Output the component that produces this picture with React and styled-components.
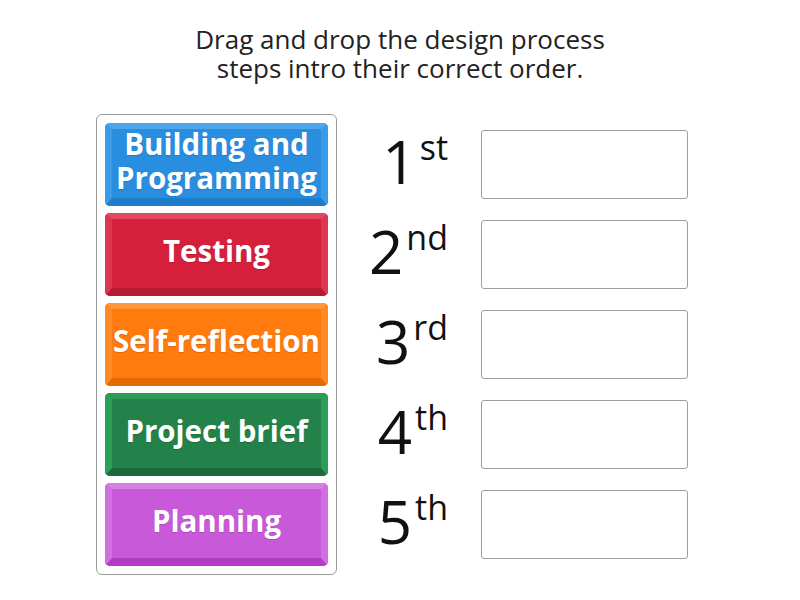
import React from "react";
import styled, { createGlobalStyle } from "styled-components";

const Global = createGlobalStyle`
  html, body { margin: 0; padding: 0; background: #fff; }
  body { font-family: "Open Sans", "Liberation Sans", sans-serif; }
`;

const Page = styled.div`
  width: 800px;
  height: 600px;
  overflow: hidden;
  display: flex;
  flex-direction: column;
`;

const Title = styled.div`
  margin-top: 25px;
  text-align: center;
  font-size: 26px;
  line-height: 29px;
  color: #222;
`;

const Main = styled.div`
  display: flex;
  margin-top: 31px;
  padding-left: 96px;
`;

const Panel = styled.div`
  width: 241px;
  border: 1px solid #9a9a9a;
  border-radius: 6px;
  padding: 8px;
  box-sizing: border-box;
  display: flex;
  flex-direction: column;
  gap: 7px;
`;

const Tile = styled.div`
  position: relative;
  height: 83px;
  box-sizing: border-box;
  padding-bottom: 7px;
  border-radius: 5px;
  background: ${(p) => p.$c.main};
  display: flex;
  align-items: center;
  justify-content: center;
  text-align: center;
  color: #fff;
  font-weight: 700;
  font-size: 29.5px;
  line-height: 34px;
  text-shadow: 0 1px 1px rgba(0, 0, 0, 0.15);
  &::before {
    content: "";
    position: absolute;
    inset: 0;
    border-radius: 5px;
    border-style: solid;
    border-width: 6px 7px 8px 7px;
    border-color: ${(p) => p.$c.top} ${(p) => p.$c.side} ${(p) => p.$c.bottom} ${(p) => p.$c.side};
    pointer-events: none;
  }
`;

const TileText = styled.span`
  position: relative;
  white-space: nowrap;
`;

const Answers = styled.div`
  margin-left: 21px;
  padding-top: 9px;
  display: flex;
  flex-direction: column;
  gap: 7px;
`;

const Row = styled.div`
  height: 83px;
  display: flex;
  align-items: center;
`;

const Ordinal = styled.div`
  width: 90px;
  text-align: right;
  font-size: 60px;
  line-height: 60px;
  color: #111;
  padding-bottom: 8px;
`;

const Sup = styled.span`
  font-size: 34px;
  line-height: 0;
  vertical-align: 24px;
  margin-left: 3px;
`;

const Slot = styled.div`
  margin-left: 33px;
  width: 207px;
  height: 69px;
  box-sizing: border-box;
  border: 1.5px solid #9d9d9d;
  border-radius: 3px;
  background: #fff;
`;

const palette = {
  blue: { main: "#2a8ee0", top: "#4ea6ec", side: "#3b9be7", bottom: "#1d7dca" },
  red: { main: "#d6203b", top: "#e2485f", side: "#dc3651", bottom: "#b51a30" },
  orange: { main: "#ff7b0d", top: "#ff9838", side: "#ff8a25", bottom: "#e56a00" },
  green: { main: "#22824a", top: "#2e9a58", side: "#2aa056", bottom: "#1a6a3b" },
  purple: { main: "#c85ad9", top: "#d67fe4", side: "#d070e0", bottom: "#b53ac8" },
};

const tiles = [
  { c: "blue", t: ["Building and", "Programming"] },
  { c: "red", t: ["Testing"] },
  { c: "orange", t: ["Self-reflection"] },
  { c: "green", t: ["Project brief"] },
  { c: "purple", t: ["Planning"] },
];

const ordinals = [
  ["1", "st"],
  ["2", "nd"],
  ["3", "rd"],
  ["4", "th"],
  ["5", "th"],
];

export default function App() {
  return (
    <Page>
      <Global />
      <Title>
        Drag and drop the design process
        <br />
        steps intro their correct order.
      </Title>
      <Main>
        <Panel>
          {tiles.map((tile) => (
            <Tile key={tile.c} $c={palette[tile.c]}>
              <TileText>
                {tile.t.map((line, i) => (
                  <React.Fragment key={i}>
                    {i > 0 && <br />}
                    {line}
                  </React.Fragment>
                ))}
              </TileText>
            </Tile>
          ))}
        </Panel>
        <Answers>
          {ordinals.map(([n, s]) => (
            <Row key={n}>
              <Ordinal>
                {n}
                <Sup>{s}</Sup>
              </Ordinal>
              <Slot />
            </Row>
          ))}
        </Answers>
      </Main>
    </Page>
  );
}
